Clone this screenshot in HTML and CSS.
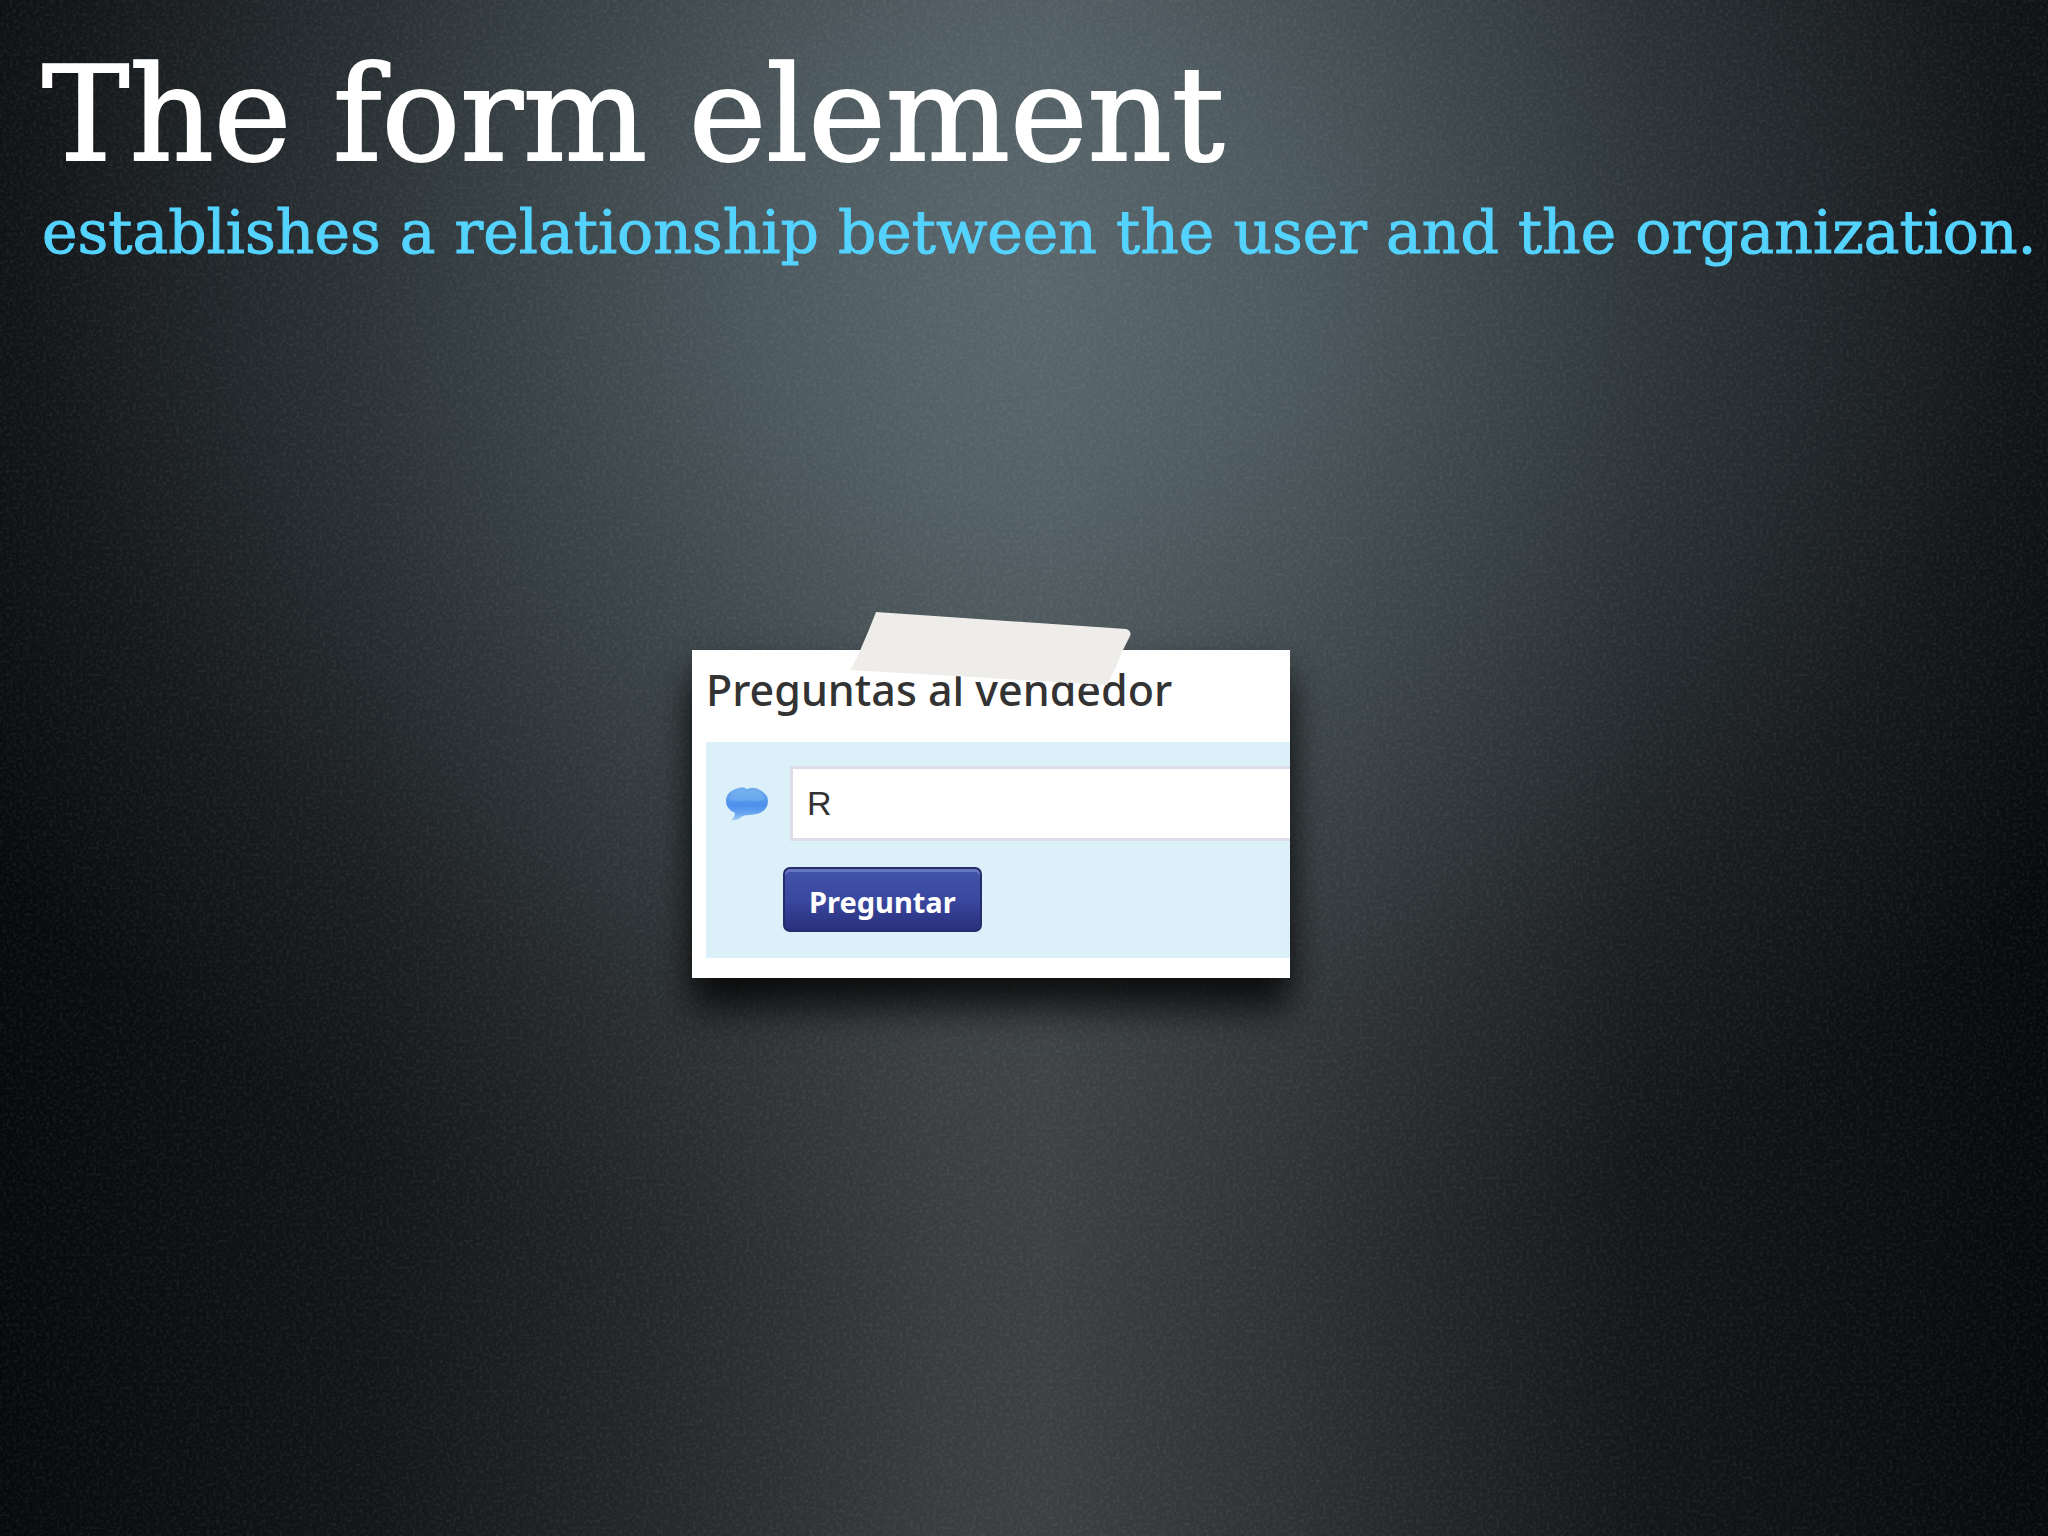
FILE: index.html
```html
<!DOCTYPE html>
<html lang="en">
<head>
    <meta charset="UTF-8">
    <meta name="viewport" content="width=device-width, initial-scale=1.0">
    <title>The form element</title>
    <link rel="stylesheet" href="styles.css">
</head>
<body>
<svg class="grain" aria-hidden="true">
    <filter id="noise">
        <feTurbulence type="fractalNoise" baseFrequency="0.3" numOctaves="2" seed="4" />
        <feColorMatrix type="matrix" values="0 0 0 0 1  0 0 0 0 1  0 0 0 0 1  3 0 0 0 -1.3" />
    </filter>
    <rect width="100%" height="100%" filter="url(#noise)" />
</svg>

<main class="slide">
    <header class="slide-header">
        <h1>The form element</h1>
        <p class="subtitle">establishes a relationship between the user and the organization.</p>
    </header>

    <div class="stage">
        <section class="card" lang="es">
            <svg class="tape" viewBox="0 0 282 74" aria-hidden="true">
                <path d="M26 0 L276 17 Q282 19 280 24 L271 42 L266 55 L257 73 L0 58 L7 46 L12 34 L18 20 Z" fill="#efedea" />
            </svg>
            <div class="card-content">
                <h2><label for="question">Preguntas al vendedor</label></h2>
                <form class="question-form">
                    <div class="question-row">
                        <svg class="bubble" viewBox="0 0 42 34" aria-hidden="true">
                            <defs>
                                <linearGradient id="bubbleFill" x1="0" y1="0" x2="0" y2="1">
                                    <stop offset="0" stop-color="#76b0ee" />
                                    <stop offset="0.55" stop-color="#4c90ec" />
                                    <stop offset="0.8" stop-color="#68a6f2" />
                                    <stop offset="1" stop-color="#a9d0f7" />
                                </linearGradient>
                            </defs>
                            <path d="M13 1 Q17 -1 21 2 Q28 -1 34 3 Q42 7 42 14 Q42 27 23 28 Q17 28 14 31 Q11 34 5 33 Q9 30 9 26 Q0 22 0 14 Q0 4 13 1 Z" fill="url(#bubbleFill)" />
                            <path d="M3 12 Q5 4 14 3 Q18 3 21 5 Q27 2 33 5 Q38 8 39 12 Q30 16 21 13 Q12 16 3 12 Z" fill="#8cc2f6" opacity="0.3" />
                        </svg>
                        <input type="text" id="question" name="question" value="R">
                    </div>
                    <button type="submit">Preguntar</button>
                </form>
            </div>
        </section>
    </div>
</main>
</body>
</html>
```
FILE: styles.css
```css
* {
    box-sizing: border-box;
}

body {
    margin: 0;
    min-height: 100vh;
    /* Spotlight from the top over a dark backdrop */
    background:
        radial-gradient(ellipse 62% 66% at 50% 18%, rgba(118, 142, 150, 0.5) 0%, rgba(112, 136, 144, 0.46) 22%, rgba(98, 118, 122, 0.33) 50%, rgba(70, 82, 86, 0.16) 78%, rgba(60, 72, 76, 0) 100%),
        linear-gradient(to right, #08090c 0%, #131518 18%, #25282b 32%, #3a3d40 46%, #3d4043 51%, #2f3235 63%, #141619 80%, #08090c 100%);
    overflow-x: hidden;
}

/* Fine texture over the backdrop */
.grain {
    position: absolute;
    top: 0;
    left: 0;
    width: 100%;
    height: 100%;
    opacity: 0.05;
}

.slide {
    position: relative;
    min-height: 100vh;
    display: flex;
    flex-direction: column;
}

.slide-header {
    padding: 40px 0 0 42px;
    font-family: "DejaVu Serif", serif;
    white-space: nowrap;
}

h1 {
    margin: 0;
    font-size: 131px;
    font-weight: normal;
    line-height: 150px;
    color: #ffffff;
    -webkit-text-stroke: 2px #ffffff;
}

.subtitle {
    margin: 0;
    font-size: 60px;
    line-height: 84px;
    color: #54d3ff;
    -webkit-text-stroke: 1px #54d3ff;
}

.stage {
    flex: 1;
    display: flex;
    justify-content: center;
    align-items: flex-start;
    padding: 376px 66px 0 0;
}

/* Taped card */
.card {
    position: relative;
    width: 598px;
    background: #ffffff;
    box-shadow: 0 32px 36px rgba(0, 0, 0, 0.7), 0 12px 24px rgba(0, 0, 0, 0.3);
}

.tape {
    position: absolute;
    top: -38px;
    left: 158px;
    width: 282px;
    height: 74px;
}

.card-content {
    padding: 10px 0 20px 14px;
    overflow: hidden;
}

h2 {
    margin: 0 0 22px;
    font-family: "Noto Sans", sans-serif;
    font-size: 43px;
    font-weight: 500;
    line-height: 60px;
    color: #333333;
}

.question-form {
    padding: 24px 0 26px 20px;
    background: #dcf0f9;
}

.question-row {
    display: flex;
    align-items: center;
    gap: 22px;
    margin-bottom: 26px;
}

.bubble {
    flex: none;
    width: 42px;
    height: 34px;
}

input[type="text"] {
    flex: none;
    width: 100%;
    height: 75px;
    padding: 0 14px;
    border: 3px solid #dcdde8;
    font-family: "Liberation Sans", sans-serif;
    font-size: 34px;
    color: #333333;
    background: #ffffff;
}

button {
    display: block;
    height: 65px;
    margin-left: 57px;
    padding: 4px 24px 0;
    border: 2px solid #262c6b;
    border-radius: 7px;
    background: linear-gradient(#4354a8, #3a48a0 50%, #29307c);
    box-shadow: inset 0 3px 0 #6777c0;
    font-family: "Noto Sans", sans-serif;
    font-size: 29px;
    font-weight: bold;
    color: #ffffff;
}
```
